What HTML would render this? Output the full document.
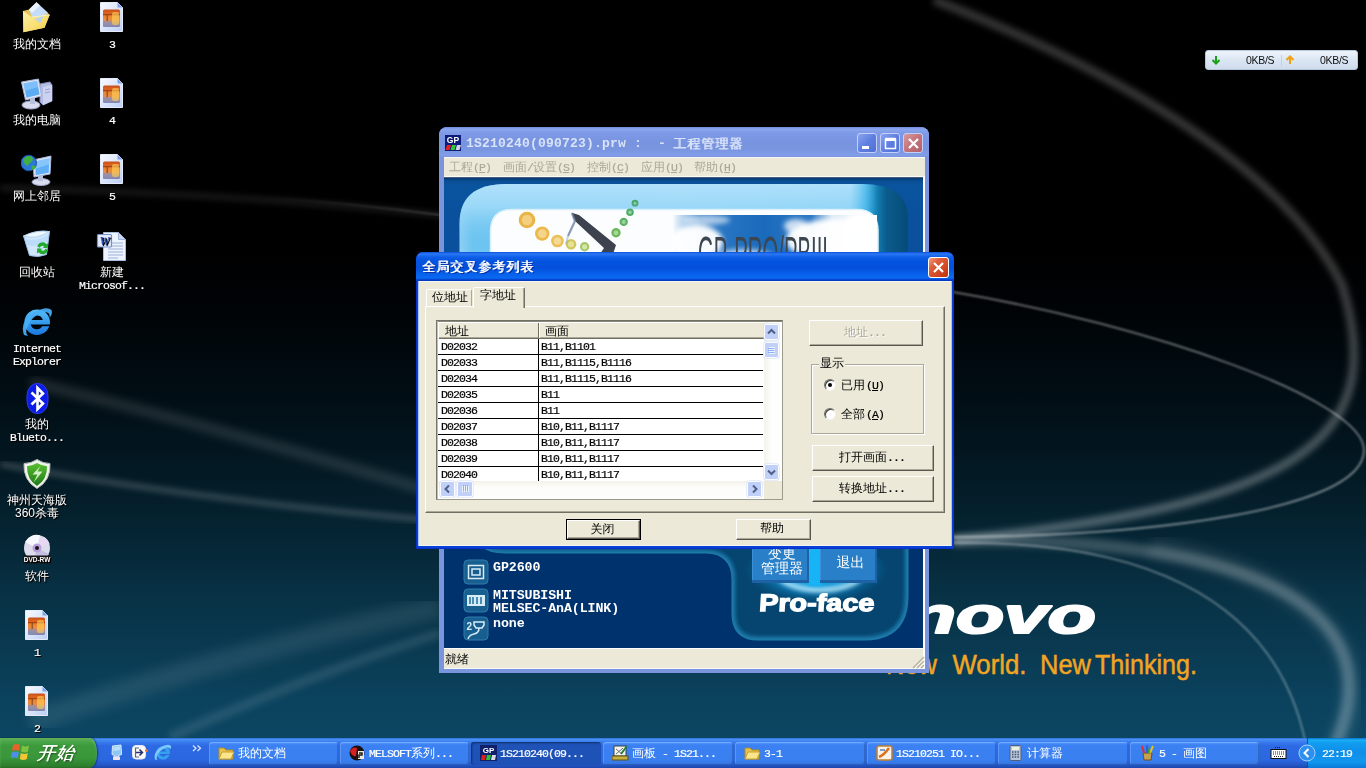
<!DOCTYPE html>
<html lang="zh-CN">
<head>
<meta charset="utf-8">
<title>Desktop</title>
<style>
*{box-sizing:border-box;margin:0;padding:0}
html,body{width:1366px;height:768px;overflow:hidden;background:#000}
body{position:relative;font-family:"Liberation Sans","WenQuanYi Zen Hei","Noto Sans CJK SC",sans-serif;font-size:12px;color:#000;line-height:1}
.abs{position:absolute}
#desktop,#mainwin,#dialog,#taskbar{will-change:transform}
#bg{position:absolute;left:0;top:0;width:1366px;height:768px;background:linear-gradient(to bottom,#000 0px,#000 255px,#000407 315px,#010e15 400px,#041e2a 500px,#083246 600px,#0b425d 700px,#0c4662 738px)}
#bgsvg{position:absolute;left:0;top:0}
.mono{font-family:"Liberation Mono","WenQuanYi Zen Hei","Noto Sans CJK SC",monospace}
/* desktop icons */
.ico{position:absolute;width:90px;text-align:center;color:#fff;font-size:12px;line-height:12px;text-shadow:1px 1px 1px #000}
.ico svg{display:block;margin:0 auto}
/* taskbar */
#taskbar{position:absolute;left:0;top:738px;width:1366px;height:30px;background:linear-gradient(to bottom,#2f6cd4 0,#4890f6 1.5px,#3a7cee 4px,#2c69e2 8px,#2b68e0 22px,#2457c6 27px,#1c46ac 30px)}
.tb{position:absolute;top:4px;height:23px;border-radius:3px;background:linear-gradient(to bottom,#5a9aff 0,#3c81f3 3px,#3a7ff0 18px,#3573e0 23px);color:#fff;font-size:12px;line-height:22px;padding-left:29px;white-space:nowrap;overflow:hidden;box-shadow:inset 1px 1px 0 rgba(255,255,255,.18),inset -1px -1px 0 rgba(0,0,0,.18)}
.tb.act{background:#1e52b7;box-shadow:inset 1px 1px 2px rgba(0,0,0,.45)}
.tb svg{position:absolute;left:9px;top:3px}
.tb i{white-space:pre}

#start{position:absolute;left:0;top:0;width:97px;height:30px;border-radius:0 7px 7px 0/0 15px 15px 0;background:linear-gradient(to bottom,#2f8a2f 0,#4aa84a 3px,#3c9a3c 8px,#3a963a 20px,#2d7f2d 28px,#266e26 30px);box-shadow:inset 0 2px 2px rgba(180,230,150,.35),1px 0 2px rgba(0,0,40,.5)}
#start span{position:absolute;left:37px;top:4px;color:#fff;font:italic normal 18px/22px "Liberation Sans","WenQuanYi Zen Hei","Noto Sans CJK SC",sans-serif;text-shadow:.3px 0 0 #f4ffe8,1px 1px 2px rgba(0,0,0,.6);letter-spacing:1px;transform:skewX(-6deg);white-space:nowrap}
#tray{position:absolute;left:1307px;top:0;width:59px;height:30px;background:linear-gradient(to bottom,#0c6fd0 0,#19b0f5 2px,#129cf0 5px,#0f8eea 14px,#1097ee 24px,#0b78d8 30px);border-left:1px solid #0a4ea8}
#chev{position:absolute;left:1298px;top:6px;width:18px;height:18px}
#clock{position:absolute;left:1322px;top:9px;color:#fff;font-size:12px;white-space:nowrap}
.ico{position:absolute;width:100px;height:70px;text-align:center;color:#fff;font-size:12px;line-height:13px;text-shadow:1px 1px 0 #000,1px 1px 1px #000;white-space:nowrap}
.ico svg{position:absolute;left:34px;top:1px}
.ico div{position:absolute;left:0;width:100px;top:37px}
.ico b{font-weight:normal;font-family:"Liberation Sans",sans-serif}
#net{position:absolute;left:1205px;top:50px;width:153px;height:20px;border-radius:3px;background:linear-gradient(to bottom,#eef4fb 0,#dbe6f3 50%,#cfdcec 100%);border:1px solid #b8c8dc;font:10.5px/18px "Liberation Sans",sans-serif;letter-spacing:-0.3px;color:#101010}
#net span{position:absolute;top:0}
i{font-style:normal;font-family:"Liberation Mono",monospace;font-size:11.5px;letter-spacing:-0.9px;-webkit-text-stroke:0.2px currentColor}
#mainwin{position:absolute;left:439px;top:127px;width:490px;height:546px;background:#7b94de;border-radius:8px 8px 0 0;overflow:hidden}
#mw-title{position:absolute;left:0;top:0;width:490px;height:30px;background:linear-gradient(to bottom,#6f8bdc 0,#8ba6ee 2px,#7e9ae6 6px,#7893df 15px,#7a96e0 23px,#839ee8 28px,#7a93dc 30px)}
#mw-title .t{position:absolute;left:27px;top:9px;color:#d9e3f8;font:bold 13px/15px "Liberation Mono",monospace;white-space:pre;letter-spacing:0.2px}
#mw-title .t2{position:absolute;left:234px;top:9px;color:#d9e3f8;font:13px/15px "Liberation Sans","WenQuanYi Zen Hei","Noto Sans CJK SC",sans-serif;white-space:pre;letter-spacing:1px;text-shadow:1px 0 0 #d9e3f8}
.wb{position:absolute;top:6px;width:20px;height:20px;border-radius:3px;border:1px solid #c4d0f8;background:linear-gradient(135deg,#8aa4f0 0,#5f7fe0 50%,#4f6fd4 100%)}
.wb.x{background:linear-gradient(135deg,#d89aa0 0,#c4737a 50%,#b0606a 100%)}
#mw-menu{position:absolute;left:5px;top:30px;width:481px;height:20px;background:#ece9d8;box-shadow:inset 0 1px 0 #f8f8f6,inset 0 -1px 0 #fbfbf8;color:#aca899;font-size:12px;line-height:20px;white-space:nowrap}
#mw-menu span{position:absolute;top:0}
#mw-content{position:absolute;left:5px;top:50px;width:479px;height:471px;box-shadow:2px 0 0 #fff;background:linear-gradient(to bottom,#06386c 0,#0a4f96 3px,#0a549e 8px,#0a509c 40px);overflow:hidden;border-top:1px solid #4a5c80}
#mw-status{position:absolute;left:5px;top:521px;width:481px;height:21px;background:#ece9d8;font-size:12px;line-height:20px;padding-left:1px;border-right:2px solid #fff;border-top:1px solid #fff;box-shadow:inset 0 -1px 0 #f8f8f4}
.pt{position:absolute;left:49px;color:#fff;font:bold 13.3px/13px "Liberation Mono",monospace;white-space:pre;letter-spacing:-0.1px}
.pbtn{position:absolute;top:350px;height:55px;width:57px;background:#2a80c8;box-shadow:inset -2px -3px 0 #1d62a4,inset 1px 0 0 #3a90d8;color:#fff;font-size:14px;line-height:15px;text-align:center}
#dialog{position:absolute;left:416px;top:252px;width:538px;height:297px;background:#0a3fd8;border-radius:7px 7px 0 0;overflow:hidden;box-shadow:inset 0 0 0 1px #0831c8}
#dlg-title{position:absolute;left:0;top:0;width:538px;height:29px;background:linear-gradient(to bottom,#0a52dc 0,#2b78f4 2px,#0f5ee8 5px,#0554e0 9px,#0450dc 16px,#065ee8 21px,#0a6af2 26px,#0648d4 27.5px,#0034b4 29px);border-radius:7px 7px 0 0}
#dlg-title .t{position:absolute;left:6px;top:8px;color:#fff;font:bold 13px/14px "Liberation Sans","WenQuanYi Zen Hei","Noto Sans CJK SC",sans-serif;letter-spacing:1px;text-shadow:1px 0 0 #fff,2px 1px 0 #0a2a90;white-space:nowrap}
#dlg-x{position:absolute;left:512px;top:5px;width:21px;height:21px;border-radius:3px;border:1px solid #fff;background:linear-gradient(135deg,#f0a088 0,#e0603c 30%,#d04420 70%,#b83410 100%)}
#dlg-face{position:absolute;left:3px;top:29px;width:532px;height:265px;background:#ece9d8;box-shadow:inset 0 1px 0 #f6f6f0,inset 0 -1px 0 #f6f6f0,-1px 0 0 #a8c4f8,1px 0 0 #a8c4f8}
.d{position:absolute}
.tab{position:absolute;font-size:12px;line-height:12px;white-space:nowrap}
.btn{position:absolute;background:#ece9d8;border:1px solid;border-color:#fff #5a584e #5a584e #fff;box-shadow:inset -1px -1px 0 #aca899;font-size:12px;text-align:center;white-space:nowrap}
.btn span{position:absolute;left:0;right:0}
.sb{position:absolute;width:15px;height:16px;border-radius:2px;background:#c1d0f9;border:1px solid #fbfcff;box-shadow:0 0 0 0.500px #d0dcf8}
.row{position:absolute;left:1px;width:325px;height:16px;border-bottom:1px solid #000;font-size:12px;line-height:16px;white-space:nowrap}
.row i{position:absolute;top:0}
</style>
</head>
<body>
<div id="bg"></div>
<svg id="bgsvg" width="1366" height="768" viewBox="0 0 1366 768">
<defs>
<filter id="b1" x="-5%" y="-5%" width="110%" height="110%"><feGaussianBlur stdDeviation="1.200"/></filter>
<filter id="b3" x="-5%" y="-5%" width="110%" height="110%"><feGaussianBlur stdDeviation="3"/></filter>
<filter id="b4" x="-5%" y="-5%" width="110%" height="110%"><feGaussianBlur stdDeviation="4"/></filter>
<filter id="b6" x="-5%" y="-5%" width="110%" height="110%"><feGaussianBlur stdDeviation="6"/></filter>
<linearGradient id="fl" gradientUnits="userSpaceOnUse" x1="260" y1="0" x2="440" y2="0"><stop offset="0" stop-color="#fff" stop-opacity="0"/><stop offset="1" stop-color="#fff"/></linearGradient>
<linearGradient id="ag" gradientUnits="userSpaceOnUse" x1="0" y1="0" x2="0" y2="540"><stop offset="0" stop-color="#fff" stop-opacity=".2"/><stop offset=".5" stop-color="#fff" stop-opacity=".22"/><stop offset="1" stop-color="#fff" stop-opacity=".3"/></linearGradient>
</defs>
<g fill="none" stroke="#fff">
<!-- top-left faint line -->
<path d="M0 188 Q230 193 440 215 T930 300" stroke-width="5" opacity=".115" filter="url(#b3)"/>
<path d="M260 197 Q350 203 440 215" stroke="url(#fl)" stroke-width="1.500" opacity=".22" filter="url(#b1)"/>
<!-- big arc from top -->
<path d="M934 0 C1095 62 1280 160 1342 285 C1390 440 1300 505 953 540" stroke="url(#ag)" stroke-width="9" filter="url(#b3)"/>
<!-- thin ellipse -->
<path d="M953 292 C1150 325 1364 400 1364 450 C1364 510 1150 536 953 537" stroke-width="1.600" opacity=".5" filter="url(#b1)"/>
<!-- lower swooshes -->
<path d="M953 541 C1230 535 1400 600 1335 745" stroke-width="12" opacity=".2" filter="url(#b3)"/>
<path d="M1150 547 C1290 570 1390 640 1336 745" stroke-width="20" opacity=".1" filter="url(#b6)"/>
<path d="M953 543 C1130 540 1275 590 1306 745" stroke-width="1.600" opacity=".38" filter="url(#b1)"/>
<!-- left streaks -->
<path d="M30 382 Q220 428 440 494" stroke-width="11" opacity=".12" filter="url(#b4)"/>
<path d="M0 464 Q200 500 440 521" stroke-width="4" opacity=".28" filter="url(#b3)"/>
<path d="M30 722 Q240 650 440 607" stroke-width="22" opacity=".085" filter="url(#b6)"/>
<path d="M170 737 Q310 675 440 633" stroke-width="10" opacity=".1" filter="url(#b3)"/>
</g>
<g font-family="Liberation Sans,sans-serif">
<text x="842" y="632.500" font-size="52" font-weight="bold" font-style="italic" fill="#fff" stroke="#fff" stroke-width="2.200" stroke-linejoin="round" textLength="254" lengthAdjust="spacingAndGlyphs">lenovo</text>
<g font-size="28" fill="#f2a522" stroke="#f2a522" stroke-width=".5">
<text x="886" y="673.700" textLength="51" lengthAdjust="spacingAndGlyphs">New</text>
<text x="952.500" y="673.700" textLength="74" lengthAdjust="spacingAndGlyphs">World.</text>
<text x="1040" y="673.700" textLength="51" lengthAdjust="spacingAndGlyphs">New</text>
<text x="1095" y="673.700" textLength="102" lengthAdjust="spacingAndGlyphs">Thinking.</text>
</g></g>
</svg>
<div id="desktop">
<div class="ico" style="left:-13px;top:1px"><svg width="32" height="32" viewBox="0 0 32 32"><defs><linearGradient id="fg" x1="0" y1="0" x2="1" y2="1"><stop offset="0" stop-color="#fdf0a8"/><stop offset=".6" stop-color="#f8de70"/><stop offset="1" stop-color="#eec848"/></linearGradient></defs><path d="M2 9 L8 7.500 L27 11 L28.600 13 L23.500 25.700 L2.400 30.300Z" fill="#e8c458"/><path d="M8 7.500 L15.500 0.300 L27 10.700 L18.500 16.500 L11 15Z" fill="#c4dcfa"/><path d="M8 7.500 L15.500 0.300 L19 3.500 L11 11Z" fill="#eaf2fe"/><path d="M2 9 L11 15 L28.600 13 L23.500 25.700 L2.400 30.300Z" fill="url(#fg)"/><path d="M13.500 17 L22.500 14 L19.300 21Z" fill="#bcd4f2"/><path d="M11 15 L28.600 13" stroke="#f8f0c8" stroke-width="1" fill="none"/></svg><div style="line-height:13px">我的文档</div></div>
<div class="ico" style="left:-13px;top:77px"><svg width="32" height="32" viewBox="0 0 32 32"><path d="M19 6 l10 -2 l2 3 v16 l-9 4 l-3 -3z" fill="#b4bce2" stroke="#8890c0" stroke-width="1"/><path d="M22 9 l9 -2 v16 l-9 4z" fill="#ccd2f0"/><path d="M24 12 l5 -1.200 M24 15 l5 -1.200" stroke="#98a0d0" stroke-width="1"/><ellipse cx="10" cy="27" rx="9" ry="4" fill="#d8dcf0" stroke="#a0a8c8" stroke-width="1"/><path d="M9 19 h5 v7 h-5z" fill="#b8c0dc"/><path d="M0.500 4 l17 -3 l3 17 l-16 4z" fill="#dfe6f8" stroke="#a8b4d8" stroke-width="1"/><path d="M2.500 5.500 l13.500 -2.500 l2.500 13.500 l-13 3.300z" fill="#5cacf4"/><path d="M2.500 5.500 l13.500 -2.500 l1 6 l-13.500 4z" fill="#8cc8fc" opacity=".7"/></svg><div style="line-height:13px">我的电脑</div></div>
<div class="ico" style="left:-13px;top:153px"><svg width="32" height="32" viewBox="0 0 32 32"><ellipse cx="20" cy="28" rx="9" ry="3.500" fill="#d8dcf0" stroke="#a0a8c8" stroke-width="1"/><path d="M17 20 h5 v7 h-5z" fill="#b8c0dc"/><path d="M12 6 l18 -4 l-1 18 l-16 3z" fill="#dfe6f8" stroke="#a8b4d8" stroke-width="1"/><path d="M14 7.500 l14.500 -3.200 l-0.800 14.500 l-13 2.500z" fill="#60b0f8"/><path d="M14 7.500 l14.500 -3.200 l-0.300 6 l-14 4.500z" fill="#98d0fc" opacity=".7"/><g transform="translate(-1 -2.500) scale(.92)"><circle cx="9.500" cy="12.500" r="8.500" fill="#2c78d8" stroke="#1c50a8" stroke-width="1"/><path d="M3.500 8.500 q4 -5 9 -3 q3 3 0 6 q-3 1 -4 4 q-4 0 -5 -7z M12.500 15.500 q3 -1 5 1 q-1 3 -5 4z" fill="#40b040"/></g></svg><div style="line-height:13px">网上邻居</div></div>
<div class="ico" style="left:-13px;top:229px"><svg width="32" height="32" viewBox="0 0 32 32"><path d="M2.500 6 l26 -4.500 l-3 23 q-8 3.500 -17 1z" fill="#cfe6fb" stroke="#9cc0e8" stroke-width="1"/><path d="M2.500 6 q13 4 26 -4.500 q-13 -2 -26 4.500z" fill="#eef8ff" stroke="#b4d4f0" stroke-width="1"/><path d="M4 9 q11 3 23.500 -4 l-1 7 q-10 6 -21 3z" fill="#b4d8f8" opacity=".7"/><g transform="translate(2 -3) scale(1.150)"><path d="M12.500 17 a4.500 4.500 0 0 1 8 -2 l1.500 -1 l-0.500 4.500 l-4.500 -0.500 l1.500 -1 a2.500 2.500 0 0 0 -4 1z M21.500 20 a4.500 4.500 0 0 1 -8 2 l-1.500 1 l0.500 -4.500 l4.500 0.500 l-1.500 1 a2.500 2.500 0 0 0 4 -1z" fill="#22aa2c"/></g></svg><div style="line-height:13px">回收站</div></div>
<div class="ico" style="left:-13px;top:305px"><svg width="32" height="32" viewBox="0 0 32 32"><defs><linearGradient id="ieg" x1="0" y1="0" x2="0" y2="1"><stop offset="0" stop-color="#58c0fc"/><stop offset="1" stop-color="#1878dc"/></linearGradient></defs><g transform="translate(-2.500 -3.500) scale(1.160)"><path d="M16 6 a11 11 0 1 0 10.500 14.500 h-6 a5.500 5.500 0 0 1 -10 -1.500 h16.500 a11 11 0 0 0 -11 -13z M10.500 15 a5.500 5.500 0 0 1 10.500 0z" fill="url(#ieg)"/></g><path d="M3 29 Q-2 15 14 6 Q26 -0.500 30.500 4 Q32 8 28.500 12 Q29.500 5 22 6.500 Q10 10 6 22 Q4 27 7 30z" fill="#48b0f8" opacity=".92"/></svg><div style="line-height:12px"><i>Internet</i><br><i>Explorer</i></div></div>
<div class="ico" style="left:-13px;top:381px"><svg width="32" height="32" viewBox="0 0 32 32"><rect x="6" y="1.500" width="21" height="30" rx="10" ry="12.500" fill="#0c1ce8" stroke="#2c3cf0" stroke-width="1"/><path d="M10.500 10.500 l11.500 11 l-5.500 5.500 v-21 l5.500 5.500 l-11.500 11" fill="none" stroke="#fff" stroke-width="2.600" stroke-linejoin="miter"/></svg><div style="line-height:13px">我的<br><i>Blueto...</i></div></div>
<div class="ico" style="left:-13px;top:457px"><svg width="32" height="32" viewBox="0 0 32 32"><defs><linearGradient id="sg" x1="0" y1="0" x2="0" y2="1"><stop offset="0" stop-color="#58c030"/><stop offset="1" stop-color="#207818"/></linearGradient></defs><path d="M16 1.500 q6 4 13 4 q1 17 -13 25 q-14 -8 -13 -25 q7 0 13 -4z" fill="#f0f2ee" stroke="#b0b8b0" stroke-width="1"/><path d="M16 5 q5 3 10 3.300 q0.500 13 -10 19.700 q-10.500 -6.700 -10 -19.700 q5 -0.300 10 -3.300z" fill="url(#sg)"/><path d="M19.500 8 l-8 8.500 h5 l-4 8 l9 -11 h-5z" fill="#d8f0c8"/></svg><div style="line-height:13px">神州天海版<br><b>360</b>杀毒</div></div>
<div class="ico" style="left:-13px;top:533px"><svg width="32" height="32" viewBox="0 0 32 32"><circle cx="16" cy="14" r="13" fill="#dcdcec"/><path d="M16 14 L4 8 A13 13 0 0 1 19 1.300z" fill="#f8f8ff"/><path d="M16 14 L28 20 A13 13 0 0 1 13 26.700z" fill="#c4c0e0"/><path d="M16 14 L22 2.500 A13 13 0 0 1 28.500 10z" fill="#e8d8f4"/><circle cx="16" cy="14" r="4.500" fill="#b8a0d8"/><circle cx="16" cy="14" r="2" fill="#181020"/><rect x="2" y="21.500" width="28" height="8" fill="#181818"/><text x="16" y="28" font-family="Liberation Sans,sans-serif" font-size="6.500" font-weight="bold" fill="#fff" text-anchor="middle">DVD-RW</text></svg><div style="line-height:13px">软件</div></div>
<div class="ico" style="left:-13px;top:609px"><svg width="32" height="32" viewBox="0 0 32 32"><defs><linearGradient id="dg1" x1="0" y1="0" x2="0" y2="1"><stop offset="0" stop-color="#c4501c"/><stop offset=".22" stop-color="#e4661e"/><stop offset=".3" stop-color="#9a3c18"/><stop offset=".36" stop-color="#ec8428"/><stop offset=".6" stop-color="#e88c44"/><stop offset=".8" stop-color="#a88c98"/><stop offset="1" stop-color="#7c86b4"/></linearGradient><linearGradient id="dp1" x1="0" y1="0" x2="1" y2="1"><stop offset="0" stop-color="#f8faff"/><stop offset=".5" stop-color="#dce6fc"/><stop offset="1" stop-color="#bccef6"/></linearGradient></defs><g transform="translate(0 -2)"><path d="M4.500 2.500 h17 l5 5 v24 h-22z" fill="url(#dp1)" stroke="#e4ecfc" stroke-width="1"/><path d="M21.500 2.500 l5 5 h-5z" fill="#7ea4e4"/><rect x="7" y="9.500" width="17" height="17.500" rx="1.500" fill="url(#dg1)"/><rect x="16" y="12" width="7" height="13" rx="2" fill="#ffd45c" opacity=".6"/><rect x="7" y="21" width="8" height="6" rx="1" fill="#8890b8" opacity=".55"/><rect x="10.500" y="15" width="1.500" height="6" fill="#5a3020" opacity=".55"/></g></svg><div style="line-height:13px"><i>1</i></div></div>
<div class="ico" style="left:-13px;top:685px"><svg width="32" height="32" viewBox="0 0 32 32"><defs><linearGradient id="dg2" x1="0" y1="0" x2="0" y2="1"><stop offset="0" stop-color="#c4501c"/><stop offset=".22" stop-color="#e4661e"/><stop offset=".3" stop-color="#9a3c18"/><stop offset=".36" stop-color="#ec8428"/><stop offset=".6" stop-color="#e88c44"/><stop offset=".8" stop-color="#a88c98"/><stop offset="1" stop-color="#7c86b4"/></linearGradient><linearGradient id="dp2" x1="0" y1="0" x2="1" y2="1"><stop offset="0" stop-color="#f8faff"/><stop offset=".5" stop-color="#dce6fc"/><stop offset="1" stop-color="#bccef6"/></linearGradient></defs><g transform="translate(0 -2)"><path d="M4.500 2.500 h17 l5 5 v24 h-22z" fill="url(#dp2)" stroke="#e4ecfc" stroke-width="1"/><path d="M21.500 2.500 l5 5 h-5z" fill="#7ea4e4"/><rect x="7" y="9.500" width="17" height="17.500" rx="1.500" fill="url(#dg2)"/><rect x="16" y="12" width="7" height="13" rx="2" fill="#ffd45c" opacity=".6"/><rect x="7" y="21" width="8" height="6" rx="1" fill="#8890b8" opacity=".55"/><rect x="10.500" y="15" width="1.500" height="6" fill="#5a3020" opacity=".55"/></g></svg><div style="line-height:13px"><i>2</i></div></div>
<div class="ico" style="left:62px;top:1px"><svg width="32" height="32" viewBox="0 0 32 32"><defs><linearGradient id="dg3" x1="0" y1="0" x2="0" y2="1"><stop offset="0" stop-color="#c4501c"/><stop offset=".22" stop-color="#e4661e"/><stop offset=".3" stop-color="#9a3c18"/><stop offset=".36" stop-color="#ec8428"/><stop offset=".6" stop-color="#e88c44"/><stop offset=".8" stop-color="#a88c98"/><stop offset="1" stop-color="#7c86b4"/></linearGradient><linearGradient id="dp3" x1="0" y1="0" x2="1" y2="1"><stop offset="0" stop-color="#f8faff"/><stop offset=".5" stop-color="#dce6fc"/><stop offset="1" stop-color="#bccef6"/></linearGradient></defs><g transform="translate(0 -2)"><path d="M4.500 2.500 h17 l5 5 v24 h-22z" fill="url(#dp3)" stroke="#e4ecfc" stroke-width="1"/><path d="M21.500 2.500 l5 5 h-5z" fill="#7ea4e4"/><rect x="7" y="9.500" width="17" height="17.500" rx="1.500" fill="url(#dg3)"/><rect x="16" y="12" width="7" height="13" rx="2" fill="#ffd45c" opacity=".6"/><rect x="7" y="21" width="8" height="6" rx="1" fill="#8890b8" opacity=".55"/><rect x="10.500" y="15" width="1.500" height="6" fill="#5a3020" opacity=".55"/></g></svg><div style="line-height:13px"><i>3</i></div></div>
<div class="ico" style="left:62px;top:77px"><svg width="32" height="32" viewBox="0 0 32 32"><defs><linearGradient id="dg4" x1="0" y1="0" x2="0" y2="1"><stop offset="0" stop-color="#c4501c"/><stop offset=".22" stop-color="#e4661e"/><stop offset=".3" stop-color="#9a3c18"/><stop offset=".36" stop-color="#ec8428"/><stop offset=".6" stop-color="#e88c44"/><stop offset=".8" stop-color="#a88c98"/><stop offset="1" stop-color="#7c86b4"/></linearGradient><linearGradient id="dp4" x1="0" y1="0" x2="1" y2="1"><stop offset="0" stop-color="#f8faff"/><stop offset=".5" stop-color="#dce6fc"/><stop offset="1" stop-color="#bccef6"/></linearGradient></defs><g transform="translate(0 -2)"><path d="M4.500 2.500 h17 l5 5 v24 h-22z" fill="url(#dp4)" stroke="#e4ecfc" stroke-width="1"/><path d="M21.500 2.500 l5 5 h-5z" fill="#7ea4e4"/><rect x="7" y="9.500" width="17" height="17.500" rx="1.500" fill="url(#dg4)"/><rect x="16" y="12" width="7" height="13" rx="2" fill="#ffd45c" opacity=".6"/><rect x="7" y="21" width="8" height="6" rx="1" fill="#8890b8" opacity=".55"/><rect x="10.500" y="15" width="1.500" height="6" fill="#5a3020" opacity=".55"/></g></svg><div style="line-height:13px"><i>4</i></div></div>
<div class="ico" style="left:62px;top:153px"><svg width="32" height="32" viewBox="0 0 32 32"><defs><linearGradient id="dg5" x1="0" y1="0" x2="0" y2="1"><stop offset="0" stop-color="#c4501c"/><stop offset=".22" stop-color="#e4661e"/><stop offset=".3" stop-color="#9a3c18"/><stop offset=".36" stop-color="#ec8428"/><stop offset=".6" stop-color="#e88c44"/><stop offset=".8" stop-color="#a88c98"/><stop offset="1" stop-color="#7c86b4"/></linearGradient><linearGradient id="dp5" x1="0" y1="0" x2="1" y2="1"><stop offset="0" stop-color="#f8faff"/><stop offset=".5" stop-color="#dce6fc"/><stop offset="1" stop-color="#bccef6"/></linearGradient></defs><g transform="translate(0 -2)"><path d="M4.500 2.500 h17 l5 5 v24 h-22z" fill="url(#dp5)" stroke="#e4ecfc" stroke-width="1"/><path d="M21.500 2.500 l5 5 h-5z" fill="#7ea4e4"/><rect x="7" y="9.500" width="17" height="17.500" rx="1.500" fill="url(#dg5)"/><rect x="16" y="12" width="7" height="13" rx="2" fill="#ffd45c" opacity=".6"/><rect x="7" y="21" width="8" height="6" rx="1" fill="#8890b8" opacity=".55"/><rect x="10.500" y="15" width="1.500" height="6" fill="#5a3020" opacity=".55"/></g></svg><div style="line-height:13px"><i>5</i></div></div>
<div class="ico" style="left:62px;top:229px"><svg width="32" height="32" viewBox="0 0 32 32"><path d="M7.500 2.500 h15 l7 7 v21 h-22z" fill="#eef4ff" stroke="#a8bce0" stroke-width="1"/><path d="M22.500 2.500 l7 7 h-7z" fill="#c8d8f0" stroke="#a0b4d8" stroke-width="1"/><path d="M12 13 h15 M12 16 h15 M12 19 h15 M12 22 h15 M12 25 h15 M12 28 h10" stroke="#9cb0d8" stroke-width="1.200"/><rect x="1.500" y="4.500" width="14" height="12.500" rx="1" fill="#e4ecfc" stroke="#7890d0" stroke-width="1.200"/><text x="8.500" y="15" font-family="Liberation Serif,serif" font-size="11.500" font-weight="bold" font-style="italic" fill="#2c50b0" text-anchor="middle">W</text></svg><div style="line-height:13px">新建<br><i>Microsof...</i></div></div>
<div id="net"><svg class="abs" style="left:5px;top:4px" width="10" height="10" viewBox="0 0 10 10"><path d="M5 1 v7 M1.500 5 l3.500 3.500 l3.500 -3.500" stroke="#18a018" stroke-width="2" fill="none"/></svg><span style="left:40px">0KB/S</span><span class="abs" style="left:75px;top:4px;width:1px;height:11px;background:#c4d0de"></span><svg class="abs" style="left:79px;top:4px" width="10" height="10" viewBox="0 0 10 10"><path d="M5 9 v-7 M1.500 5 l3.500 -3.500 l3.500 3.500" stroke="#f0a010" stroke-width="2" fill="none"/></svg><span style="left:114px">0KB/S</span></div>
</div>
<div id="mainwin">
<div id="mw-title">
<svg class="abs" style="left:6px;top:8px" width="16" height="16" viewBox="0 0 16 16"><rect width="16" height="16" fill="#0c1a78"/><text x="8" y="8" font-family="Liberation Sans,sans-serif" font-size="8.500" font-weight="bold" fill="#fff" text-anchor="middle">GP</text><path d="M2 10 h4 l-1.500 5 h-4z" fill="#e82020"/><path d="M7 10 h4 l-1.500 5 h-4z" fill="#30c838"/><path d="M12 10 h4 l-1.500 5 h-4z" fill="#d0d4e4"/></svg>
<div class="t">1S210240(090723).prw :  - </div><div class="t2">工程管理器</div>
<div class="wb" style="left:418px"><svg width="19" height="19" viewBox="0 0 19 19"><rect x="4" y="12" width="7" height="3" fill="#fff"/></svg></div>
<div class="wb" style="left:441px"><svg width="19" height="19" viewBox="0 0 19 19"><path d="M4.500 5.500 h10 v9 h-10z M4.500 4.500 h10" stroke="#fff" stroke-width="1.500" fill="none"/><rect x="4" y="4" width="11" height="3" fill="#fff"/></svg></div>
<div class="wb x" style="left:464px"><svg width="19" height="19" viewBox="0 0 19 19"><path d="M5 5 L14 14 M14 5 L5 14" stroke="#fff" stroke-width="2.200" fill="none"/></svg></div>
</div>
<div id="mw-menu"><span style="left:5px">工程<i>(<u>P</u>)</i></span><span style="left:59px">画面<i>/</i>设置<i>(<u>S</u>)</i></span><span style="left:143px">控制<i>(<u>C</u>)</i></span><span style="left:197px">应用<i>(<u>U</u>)</i></span><span style="left:250px">帮助<i>(<u>H</u>)</i></span></div>
<div id="mw-content">
<svg class="abs" style="left:0;top:0" width="480" height="471" viewBox="0 0 480 471">
<defs>
<linearGradient id="pg" x1="0" y1="0" x2="1" y2="0"><stop offset="0" stop-color="#8fd0f6"/><stop offset=".03" stop-color="#6cc4f0"/><stop offset=".5" stop-color="#7ccaf2"/><stop offset=".86" stop-color="#5cbeee"/><stop offset=".905" stop-color="#1ea8e4"/><stop offset=".952" stop-color="#0a5c8c"/><stop offset="1" stop-color="#064a78"/></linearGradient><linearGradient id="pg3" x1="0" y1="0" x2="1" y2="0"><stop offset="0" stop-color="#fff"/><stop offset=".87" stop-color="#fff"/><stop offset=".93" stop-color="#000"/><stop offset="1" stop-color="#000"/></linearGradient><mask id="pm"><rect x="15" y="0" width="450" height="210" fill="url(#pg3)"/></mask>
<linearGradient id="pg2" x1="0" y1="0" x2="0" y2="1"><stop offset="0" stop-color="#b4e2fb" stop-opacity=".95"/><stop offset=".12" stop-color="#a4dcf9" stop-opacity=".8"/><stop offset=".32" stop-color="#6cc4f0" stop-opacity="0"/></linearGradient>
<linearGradient id="sky" x1="0" y1="0" x2="1" y2="0"><stop offset="0" stop-color="#fff"/><stop offset=".05" stop-color="#b4d2ee"/><stop offset=".14" stop-color="#2e7ac6"/><stop offset=".45" stop-color="#1a6abc"/><stop offset=".68" stop-color="#2c78c4"/><stop offset=".78" stop-color="#dce9f6"/><stop offset="1" stop-color="#fff"/></linearGradient>
<radialGradient id="glow" cx=".5" cy=".4" r=".5"><stop offset="0" stop-color="#18b8f8"/><stop offset=".55" stop-color="#12a0e4" stop-opacity=".85"/><stop offset="1" stop-color="#0a5a8c" stop-opacity="0"/></radialGradient>
<filter id="cb"><feGaussianBlur stdDeviation="2.500"/></filter><filter id="cb2" x="-20%" y="-20%" width="140%" height="140%"><feGaussianBlur stdDeviation="2"/></filter><filter id="cb1" x="-50%" y="-20%" width="200%" height="140%"><feGaussianBlur stdDeviation="1.500"/></filter><clipPath id="skyclip"><rect x="228" y="37" width="205" height="50"/></clipPath><clipPath id="tealclip"><path d="M36 368 Q44 375.500 62 375.500 H262 Q287.500 376 287.500 402 V436 Q288 462.500 314 462.500 H420 Q464.500 462.500 464.500 418 V368Z"/></clipPath>
</defs>
<rect x="0" y="368" width="480" height="103" fill="#00326e"/>
<path d="M15.500 46 Q15.500 6 62 6 H418 Q464 6 464 40 V200 H15.500Z" fill="url(#pg)"/>
<path d="M15.500 46 Q15.500 6 62 6 H418 Q464 6 464 40 V200 H15.500Z" fill="url(#pg2)" mask="url(#pm)"/>
<path id="tealp" d="M36 368 Q44 375.500 62 375.500 H262 Q287.500 376 287.500 402 V436 Q288 462.500 314 462.500 H420 Q464.500 462.500 464.500 418 V368Z" fill="#05456f"/>
<g clip-path="url(#tealclip)"><path d="M36 368 Q44 375.500 62 375.500 H262 Q287.500 376 287.500 402 V436 Q288 462.500 314 462.500 H420 Q464.500 462.500 464.500 418 V368" fill="none" stroke="#2a94c8" stroke-width="7" opacity=".75" filter="url(#cb2)"/>
<ellipse cx="372" cy="398" rx="74" ry="36" fill="url(#glow)"/>
<ellipse cx="376" cy="392" rx="44" ry="20" fill="none" stroke="#c8f0ff" stroke-width="5" opacity=".85" filter="url(#cb2)"/>
<rect x="364" y="368" width="14" height="40" fill="#14b4f6" filter="url(#cb1)"/>
</g>
<path d="M46.500 54 Q46.500 31.500 68 31.500 H413 Q434 31.500 434 53 V330 H46.500Z" fill="#fcfdfe" stroke="#d8f0fc" stroke-width="1.500"/>
<rect x="228" y="37" width="205" height="50" fill="url(#sky)"/>
<g clip-path="url(#skyclip)"><g filter="url(#cb)" fill="#fff"><ellipse cx="252" cy="64" rx="27" ry="17" opacity=".97"/><ellipse cx="262" cy="42" rx="24" ry="5" opacity=".6"/><ellipse cx="300" cy="80" rx="30" ry="9" opacity=".7"/><ellipse cx="392" cy="62" rx="50" ry="21" opacity=".97"/><ellipse cx="352" cy="48" rx="12" ry="7" opacity=".75"/><ellipse cx="420" cy="45" rx="20" ry="10"/></g></g>
<g><circle cx="83" cy="42" r="8.300" fill="#ebb446"/><circle cx="83" cy="42" r="5.200" fill="#f3cf80"/><circle cx="98.200" cy="55.600" r="7.200" fill="#ecba4c"/><circle cx="98.200" cy="55.600" r="4.400" fill="#f4d48a"/><circle cx="113.400" cy="63" r="6.300" fill="#eac054"/><circle cx="113.400" cy="63" r="3.800" fill="#f4da94"/><circle cx="127" cy="66.200" r="5.300" fill="#d2c658"/><circle cx="127" cy="66.200" r="3" fill="#e6e29c"/><circle cx="140.600" cy="68.800" r="4.700" fill="#a4c666"/><circle cx="140.600" cy="68.800" r="2.600" fill="#d2e6a8"/>
<circle cx="172" cy="54.800" r="4.700" fill="#6cb85a"/><circle cx="172" cy="54.800" r="2.400" fill="#a8d89a"/><circle cx="179.700" cy="43.900" r="4.200" fill="#5cb262"/><circle cx="179.700" cy="43.900" r="2" fill="#9cd4a0"/><circle cx="186" cy="34.300" r="3.800" fill="#50ac6a"/><circle cx="186" cy="34.300" r="1.800" fill="#94d0a4"/><circle cx="191" cy="25.200" r="3.400" fill="#48a670"/><circle cx="191" cy="25.200" r="1.500" fill="#8cccaa"/>
<path d="M127.700 34.700 L135 37 L172 67 L169 76 L156 76 L160 70 L131 43Z" fill="#3c434e"/><path d="M128 35 L131 43 L124 58" fill="none" stroke="#66789c" stroke-width="2.200" opacity=".75"/><path d="M124 58 L122 66" fill="none" stroke="#8aa0c4" stroke-width="2" opacity=".45"/></g>
<text x="254" y="92" font-family="Liberation Sans,sans-serif" font-size="30" fill="#3c4650" textLength="130" lengthAdjust="spacingAndGlyphs" transform="translate(254 92) scale(1 1.600) translate(-254 -92)">GP-PRO/PBIII</text>
<g transform="translate(0 1)"><g fill="#185e8e" stroke="#2c7cac" stroke-width="1">
<rect x="20" y="381" width="24" height="24" rx="4"/><rect x="20" y="410" width="24" height="23" rx="4"/><rect x="20" y="438" width="24" height="23" rx="4"/></g>
<g fill="none" stroke="#d8ecf8" stroke-width="1.500"><rect x="24.500" y="386.500" width="15" height="13"/><rect x="28" y="390" width="8" height="6"/>
<rect x="23" y="416" width="18" height="11" fill="#d8ecf8" stroke="none"/><path d="M26 418 v7 M29 418 v7 M33 418 v7 M37 418 v7" stroke="#1c6c9c" stroke-width="1.500"/>
<path d="M30 443 h10 v3 l-2 3 h-6 l-2 -3z M35 449 q0 5 -5 6 t-6 5"/></g>
<text x="22.500" y="451" font-family="Liberation Sans,sans-serif" font-size="10" font-weight="bold" fill="#d8ecf8">2</text></g>
</svg>
<div class="pt" style="top:383px">GP2600</div>
<div class="pt" style="top:411px">MITSUBISHI</div>
<div class="pt" style="top:424px">MELSEC-AnA(LINK)</div>
<div class="pt" style="top:439px">none</div>
<div class="pbtn" style="left:308px"><div style="position:absolute;left:0;width:60px;top:18px">变更</div><div style="position:absolute;left:0;width:60px;top:33px">管理器</div></div>
<div class="pbtn" style="left:376px"><div style="position:absolute;left:0;width:61px;top:27px">退出</div></div>
<div class="abs" style="left:316px;top:412px;color:#fff;font:bold 24px/26px 'Liberation Sans',sans-serif;letter-spacing:0;-webkit-text-stroke:1.300px #fff;transform-origin:0 0;transform:scaleX(1.2) skewX(-3deg);white-space:nowrap">Pro-face</div>
</div>
<div id="mw-status">就绪<svg class="abs" style="right:-2px;bottom:0" width="13" height="13" viewBox="0 0 13 13"><path d="M12 1 L1 12 M12 5 L5 12 M12 9 L9 12" stroke="#b8b4a0" stroke-width="1.500"/><path d="M13 2 L2 13 M13 6 L6 13 M13 10 L10 13" stroke="#fff" stroke-width="1"/></svg></div>
</div>
<div id="dialog">
<div id="dlg-title"><div class="t">全局交叉参考列表</div>
<div id="dlg-x"><svg width="19" height="19" viewBox="0 0 19 19"><path d="M5 5 L14 14 M14 5 L5 14" stroke="#fff" stroke-width="2.200" fill="none"/></svg></div></div>
<div id="dlg-face">
<div class="d" style="left:6px;top:25px;width:520px;height:207px;border:1px solid;border-color:#fff #716f64 #716f64 #fff;box-shadow:inset -1px -1px 0 #aca899"></div>
<div class="d" style="left:7px;top:8px;width:46px;height:17px;border:1px solid;border-color:#fff #aca899 transparent #fff;border-bottom:0;border-radius:2px 2px 0 0"></div>
<div class="tab" style="left:13px;top:10px">位地址</div>
<div class="d" style="left:54px;top:6px;width:52px;height:21px;background:#ece9d8;border:1px solid;border-color:#fff #716f64 transparent #fff;border-bottom:0;border-radius:2px 2px 0 0;box-shadow:inset -1px 0 0 #aca899"></div>
<div class="tab" style="left:61px;top:8px">字地址</div>
<div id="list" class="d" style="left:17px;top:39px;width:347px;height:180px;background:#fff;border:1px solid;border-color:#716f64 #9c9a8c #9c9a8c #77756a;overflow:hidden">
<div class="d" style="left:0;top:0;width:345px;height:1px;background:#8a887a"></div><div class="d" style="left:0;top:0;width:1px;height:178px;background:#c0beb0"></div>
<div class="d" style="left:1px;top:1px;width:326px;height:17px;background:#ece9d8;box-shadow:inset 1px 1px 0 #fff,inset 0 -1px 0 #716f64,inset 0 -2px 0 #aca899;font-size:12px;line-height:12px"><span class="d" style="left:7px;top:3px">地址</span><span class="d" style="left:107px;top:3px">画面</span><span class="d" style="left:100px;top:1px;width:1px;height:15px;background:#716f64"></span><span class="d" style="left:101px;top:1px;width:1px;height:15px;background:#fff"></span></div>
<div class="row" style="top:18px"><i style="left:3px">D02032</i><i style="left:103px">B11,B1101</i></div>
<div class="row" style="top:34px"><i style="left:3px">D02033</i><i style="left:103px">B11,B1115,B1116</i></div>
<div class="row" style="top:50px"><i style="left:3px">D02034</i><i style="left:103px">B11,B1115,B1116</i></div>
<div class="row" style="top:66px"><i style="left:3px">D02035</i><i style="left:103px">B11</i></div>
<div class="row" style="top:82px"><i style="left:3px">D02036</i><i style="left:103px">B11</i></div>
<div class="row" style="top:98px"><i style="left:3px">D02037</i><i style="left:103px">B10,B11,B1117</i></div>
<div class="row" style="top:114px"><i style="left:3px">D02038</i><i style="left:103px">B10,B11,B1117</i></div>
<div class="row" style="top:130px"><i style="left:3px">D02039</i><i style="left:103px">B10,B11,B1117</i></div>
<div class="row" style="top:146px"><i style="left:3px">D02040</i><i style="left:103px">B10,B11,B1117</i></div>
<div class="d" style="left:101px;top:18px;width:1px;height:142px;background:#000"></div>
<div class="d" style="left:327px;top:1px;width:18px;height:159px;background:linear-gradient(to right,#f3f2ea,#fdfdfb 40%,#fefefe)"></div>
<div class="sb" style="left:327px;top:3px"><svg width="13" height="14" viewBox="0 0 13 14"><path d="M3 8.500 L6.500 5 L10 8.500" stroke="#4d6185" stroke-width="2" fill="none"/></svg></div>
<div class="sb" style="left:327px;top:21px"><svg width="13" height="14" viewBox="0 0 13 14"><path d="M4 4.500 h6 M4 6.500 h6 M4 8.500 h6 M4 10.500 h6" stroke="#eef4fe" stroke-width="1"/><path d="M3 5.500 h6 M3 7.500 h6 M3 9.500 h6" stroke="#8cb0f8" stroke-width="1"/></svg></div>
<div class="sb" style="left:327px;top:143px"><svg width="13" height="14" viewBox="0 0 13 14"><path d="M3 5.500 L6.500 9 L10 5.500" stroke="#4d6185" stroke-width="2" fill="none"/></svg></div>
<div class="d" style="left:1px;top:160px;width:326px;height:17px;background:linear-gradient(to bottom,#f3f2ea,#fdfdfb 40%,#fefefe)"></div>
<div class="d" style="left:327px;top:160px;width:18px;height:18px;background:#ece9d8"></div>
<div class="sb" style="left:3px;top:160px;width:15px"><svg width="13" height="14" viewBox="0 0 13 14"><path d="M8 3.500 L4.500 7 L8 10.500" stroke="#4d6185" stroke-width="2" fill="none"/></svg></div>
<div class="sb" style="left:20px;top:160px;width:16px"><svg width="14" height="14" viewBox="0 0 14 14"><path d="M4.500 4 v6 M6.500 4 v6 M8.500 4 v6 M10.500 4 v6" stroke="#eef4fe" stroke-width="1"/><path d="M5.500 3 v6 M7.500 3 v6 M9.500 3 v6" stroke="#8cb0f8" stroke-width="1"/></svg></div>
<div class="sb" style="left:310px;top:160px;width:15px"><svg width="13" height="14" viewBox="0 0 13 14"><path d="M5 3.500 L8.500 7 L5 10.500" stroke="#4d6185" stroke-width="2" fill="none"/></svg></div>
</div>
<div class="btn" style="left:390px;top:39px;width:114px;height:26px;color:#aca899;text-shadow:1px 1px 0 #fff"><span style="top:5px;left:-2px">地址<i>...</i></span></div>
<div class="d" style="left:392px;top:83px;width:113px;height:70px;border:1px solid #aca899;box-shadow:inset 1px 1px 0 #fff,1px 1px 0 #fff"></div>
<div class="d" style="left:400px;top:76px;background:#ece9d8;font-size:12px;line-height:12px;padding:0 1px;white-space:nowrap">显示</div>
<div class="d" style="left:405px;top:98px;width:12px;height:12px;border-radius:50%;background:#fff;border:1px solid;border-color:#716f64 #f4f2ea #f4f2ea #716f64;box-shadow:inset 1px 1px 0 #404040"></div>
<div class="d" style="left:409px;top:102px;width:4px;height:4px;border-radius:50%;background:#000"></div>
<div class="d" style="left:422px;top:98px;font-size:12px;line-height:12px;white-space:nowrap">已用<i style="margin-left:1px">(<u>U</u>)</i></div>
<div class="d" style="left:405px;top:127px;width:12px;height:12px;border-radius:50%;background:#fff;border:1px solid;border-color:#716f64 #f4f2ea #f4f2ea #716f64;box-shadow:inset 1px 1px 0 #404040"></div>
<div class="d" style="left:422px;top:127px;font-size:12px;line-height:12px;white-space:nowrap">全部<i style="margin-left:1px">(<u>A</u>)</i></div>
<div class="btn" style="left:393px;top:164px;width:122px;height:26px"><span style="top:5px;left:-2px">打开画面<i>...</i></span></div>
<div class="btn" style="left:393px;top:195px;width:122px;height:26px"><span style="top:5px;left:-2px">转换地址<i>...</i></span></div>
<div class="d" style="left:147px;top:238px;width:75px;height:21px;border:1px solid #000"></div>
<div class="btn" style="left:148px;top:239px;width:73px;height:19px"><span style="top:2px;left:-2px">关闭</span></div>
<div class="btn" style="left:317px;top:238px;width:75px;height:21px"><span style="top:2px;left:-3px">帮助</span></div>
</div>
</div>
<div id="taskbar">
<div id="start"><svg width="22" height="20" viewBox="0 0 22 20" style="position:absolute;left:11px;top:4px"><path d="M2 3 Q5.5 1 9 3 L8 9 Q4.500 7 1 9 Z" fill="#e8632b"/><path d="M11 3.500 Q14.500 5.500 18 3.500 L17 9.500 Q13.500 11.500 10 9.500 Z" fill="#7fc241"/><path d="M0.800 10.500 Q4.300 8.500 7.800 10.500 L6.800 16.500 Q3.300 14.500 -0.200 16.500 Z" fill="#4a8fe8"/><path d="M9.800 11 Q13.300 13 16.800 11 L15.800 17 Q12.300 19 8.800 17 Z" fill="#f5c534"/></svg><span>开始</span></div>
<svg class="abs" style="left:108px;top:6px" width="100" height="20" viewBox="0 0 100 20"><path d="M4.500 2 L13 1 L13.500 10.500 L10.500 11.500 L11 15.500 L5.500 15.500 L6.500 11.500 L4 10.500 Z" fill="#8cc8f6" stroke="#d8ecfc" stroke-width="1"/><path d="M5.500 3 L12 2.200 L12.300 6 L5.300 7Z" fill="#b8e0fc"/><rect x="5" y="12.500" width="7" height="3.500" rx="1" fill="#f0e4f0"/><rect x="24.500" y="1.500" width="13" height="13.500" rx="3.500" fill="#fcfcf8" stroke="#e8e8f4" stroke-width="1"/><path d="M28 8.500 h6 M31.500 5.500 l3 3 l-3 3" stroke="#28306c" stroke-width="1.500" fill="none"/><path d="M31 4 h-3.500 v9 h3.500" stroke="#5a6090" stroke-width="1.200" fill="none"/><circle cx="38.500" cy="6.500" r="1.500" fill="#e87830"/><g transform="translate(0 -1.500)"><path d="M55 3.500 a6.800 6.800 0 1 0 6.500 9 h-3.500 a3.500 3.500 0 0 1 -6.300 -1 h10.200 a6.800 6.800 0 0 0 -6.900 -8z M51.700 9 a3.400 3.400 0 0 1 6.500 0z" fill="#36a0f0"/><path d="M47 17 Q45 9 54 4 Q60 1 63 3.500 Q63.500 5.500 62 7 Q62 4.500 58.500 5 Q51 7.500 49 14 Q48 16 49.500 17.500z" fill="#7cc8fc"/></g><path d="M85 1.500 l3 2.800 l-3 2.800 M89.500 1.500 l3 2.800 l-3 2.800" stroke="#d4e4ff" stroke-width="1.300" fill="none"/></svg>
<div class="tb" style="left:209px;width:129px"><svg width="17" height="16" viewBox="0 0 17 16"><path d="M1 3 h5 l2 2 h7 v9 h-14z" fill="#e8c24a" stroke="#b08a20" stroke-width="1"/><path d="M1 14 l3 -7 h12 l-3 7z" fill="#fbe58a" stroke="#c9a030" stroke-width="1"/></svg>我的文档</div>
<div class="tb" style="left:340px;width:129px"><svg width="17" height="16" viewBox="0 0 17 16"><circle cx="8" cy="8" r="7.500" fill="#1a1010"/><path d="M1 6 Q4 1 8 3 L7 11 Q3 12 1 6z" fill="#d82020"/><rect x="9" y="6" width="6" height="8" fill="#f0e8d8"/><path d="M10 8 h3 v2 h-3 v3" stroke="#202020" stroke-width="1.500" fill="none"/></svg><i>MELSOFT</i>系列<i>...</i></div>
<div class="tb act" style="left:471px;width:130px"><svg width="17" height="16" viewBox="0 0 17 16"><rect x="0" y="0" width="17" height="16" fill="#10206a"/><text x="8.500" y="8" font-family="Liberation Sans,sans-serif" font-size="8" font-weight="bold" fill="#fff" text-anchor="middle">GP</text><path d="M2 10 h4 l-1 5 h-4z" fill="#e02020"/><path d="M7 10 h4 l-1 5 h-4z" fill="#30c030"/><path d="M12 10 h4 l-1 5 h-4z" fill="#d8d8e8"/></svg><i>1S210240(09...</i></div>
<div class="tb" style="left:603px;width:130px"><svg width="17" height="16" viewBox="0 0 17 16"><rect x="2" y="1" width="12" height="10" fill="#f4f4f0" stroke="#404040" stroke-width="1"/><path d="M4 9 l7 -6 M4 4 l6 5" stroke="#707070" stroke-width="1"/><path d="M9 9 l6 -8" stroke="#208040" stroke-width="2"/><rect x="0" y="11" width="16" height="4" fill="#c8b040" stroke="#605010" stroke-width="1"/></svg>画板<i> - 1S21...</i></div>
<div class="tb" style="left:735px;width:130px"><svg width="17" height="16" viewBox="0 0 17 16"><path d="M1 3 h5 l2 2 h7 v9 h-14z" fill="#e8c24a" stroke="#b08a20" stroke-width="1"/><path d="M1 14 l3 -7 h12 l-3 7z" fill="#fbe58a" stroke="#c9a030" stroke-width="1"/></svg><i>3-1</i></div>
<div class="tb" style="left:867px;width:129px"><svg width="17" height="16" viewBox="0 0 17 16"><rect x="1" y="1" width="15" height="14" rx="2" fill="#f8f4e8" stroke="#c08030" stroke-width="1.500"/><path d="M3 12 Q8 10 13 3" stroke="#e07020" stroke-width="2.500" fill="none"/><path d="M4 5 h5" stroke="#6080c0" stroke-width="1.500"/></svg><i>1S210251 IO...</i></div>
<div class="tb" style="left:998px;width:130px"><svg width="17" height="16" viewBox="0 0 17 16"><rect x="3" y="0.500" width="11" height="15" rx="1" fill="#b8c4d8" stroke="#506080" stroke-width="1"/><rect x="5" y="2" width="7" height="3" fill="#e8f4e0"/><path d="M5 7 h7 M5 9.500 h7 M5 12 h7" stroke="#405070" stroke-width="1.500" stroke-dasharray="1.500 1.200"/></svg>计算器</div>
<div class="tb" style="left:1130px;width:129px"><svg width="17" height="16" viewBox="0 0 17 16"><path d="M4 8 h9 l-1 7 h-7z" fill="#c8a050" stroke="#705020" stroke-width="1"/><path d="M5 8 l-2 -7" stroke="#e03030" stroke-width="2"/><path d="M8 8 l0 -8" stroke="#3060e0" stroke-width="2"/><path d="M11 8 l3 -7" stroke="#e0c020" stroke-width="2"/><path d="M9.500 8 l1 -6" stroke="#30a030" stroke-width="1.500"/></svg><i>5 - </i>画图</div>
<div id="tray"></div>
<svg class="abs" style="left:1270px;top:9px" width="18" height="13" viewBox="0 0 18 13"><rect x="1" y="2.500" width="15" height="9" fill="#fff" stroke="#101010" stroke-width="1"/><path d="M3 5 h11 M3 7 h11 M4 9.500 h9" stroke="#202020" stroke-width="1" stroke-dasharray="1 1"/><path d="M5 0.500 h6" stroke="#101010" stroke-width="1" stroke-dasharray="1 1"/></svg>
<div id="chev"><svg width="18" height="18" viewBox="0 0 18 18"><circle cx="9" cy="9" r="8.500" fill="#2d8ff0"/><circle cx="9" cy="9" r="8" fill="none" stroke="#9fd0ff" stroke-width="1"/><path d="M10.500 5 L6.500 9 L10.500 13" stroke="#fff" stroke-width="2" fill="none"/></svg></div>
<div id="clock"><i>22:19</i></div>
</div>
</body>
</html>
